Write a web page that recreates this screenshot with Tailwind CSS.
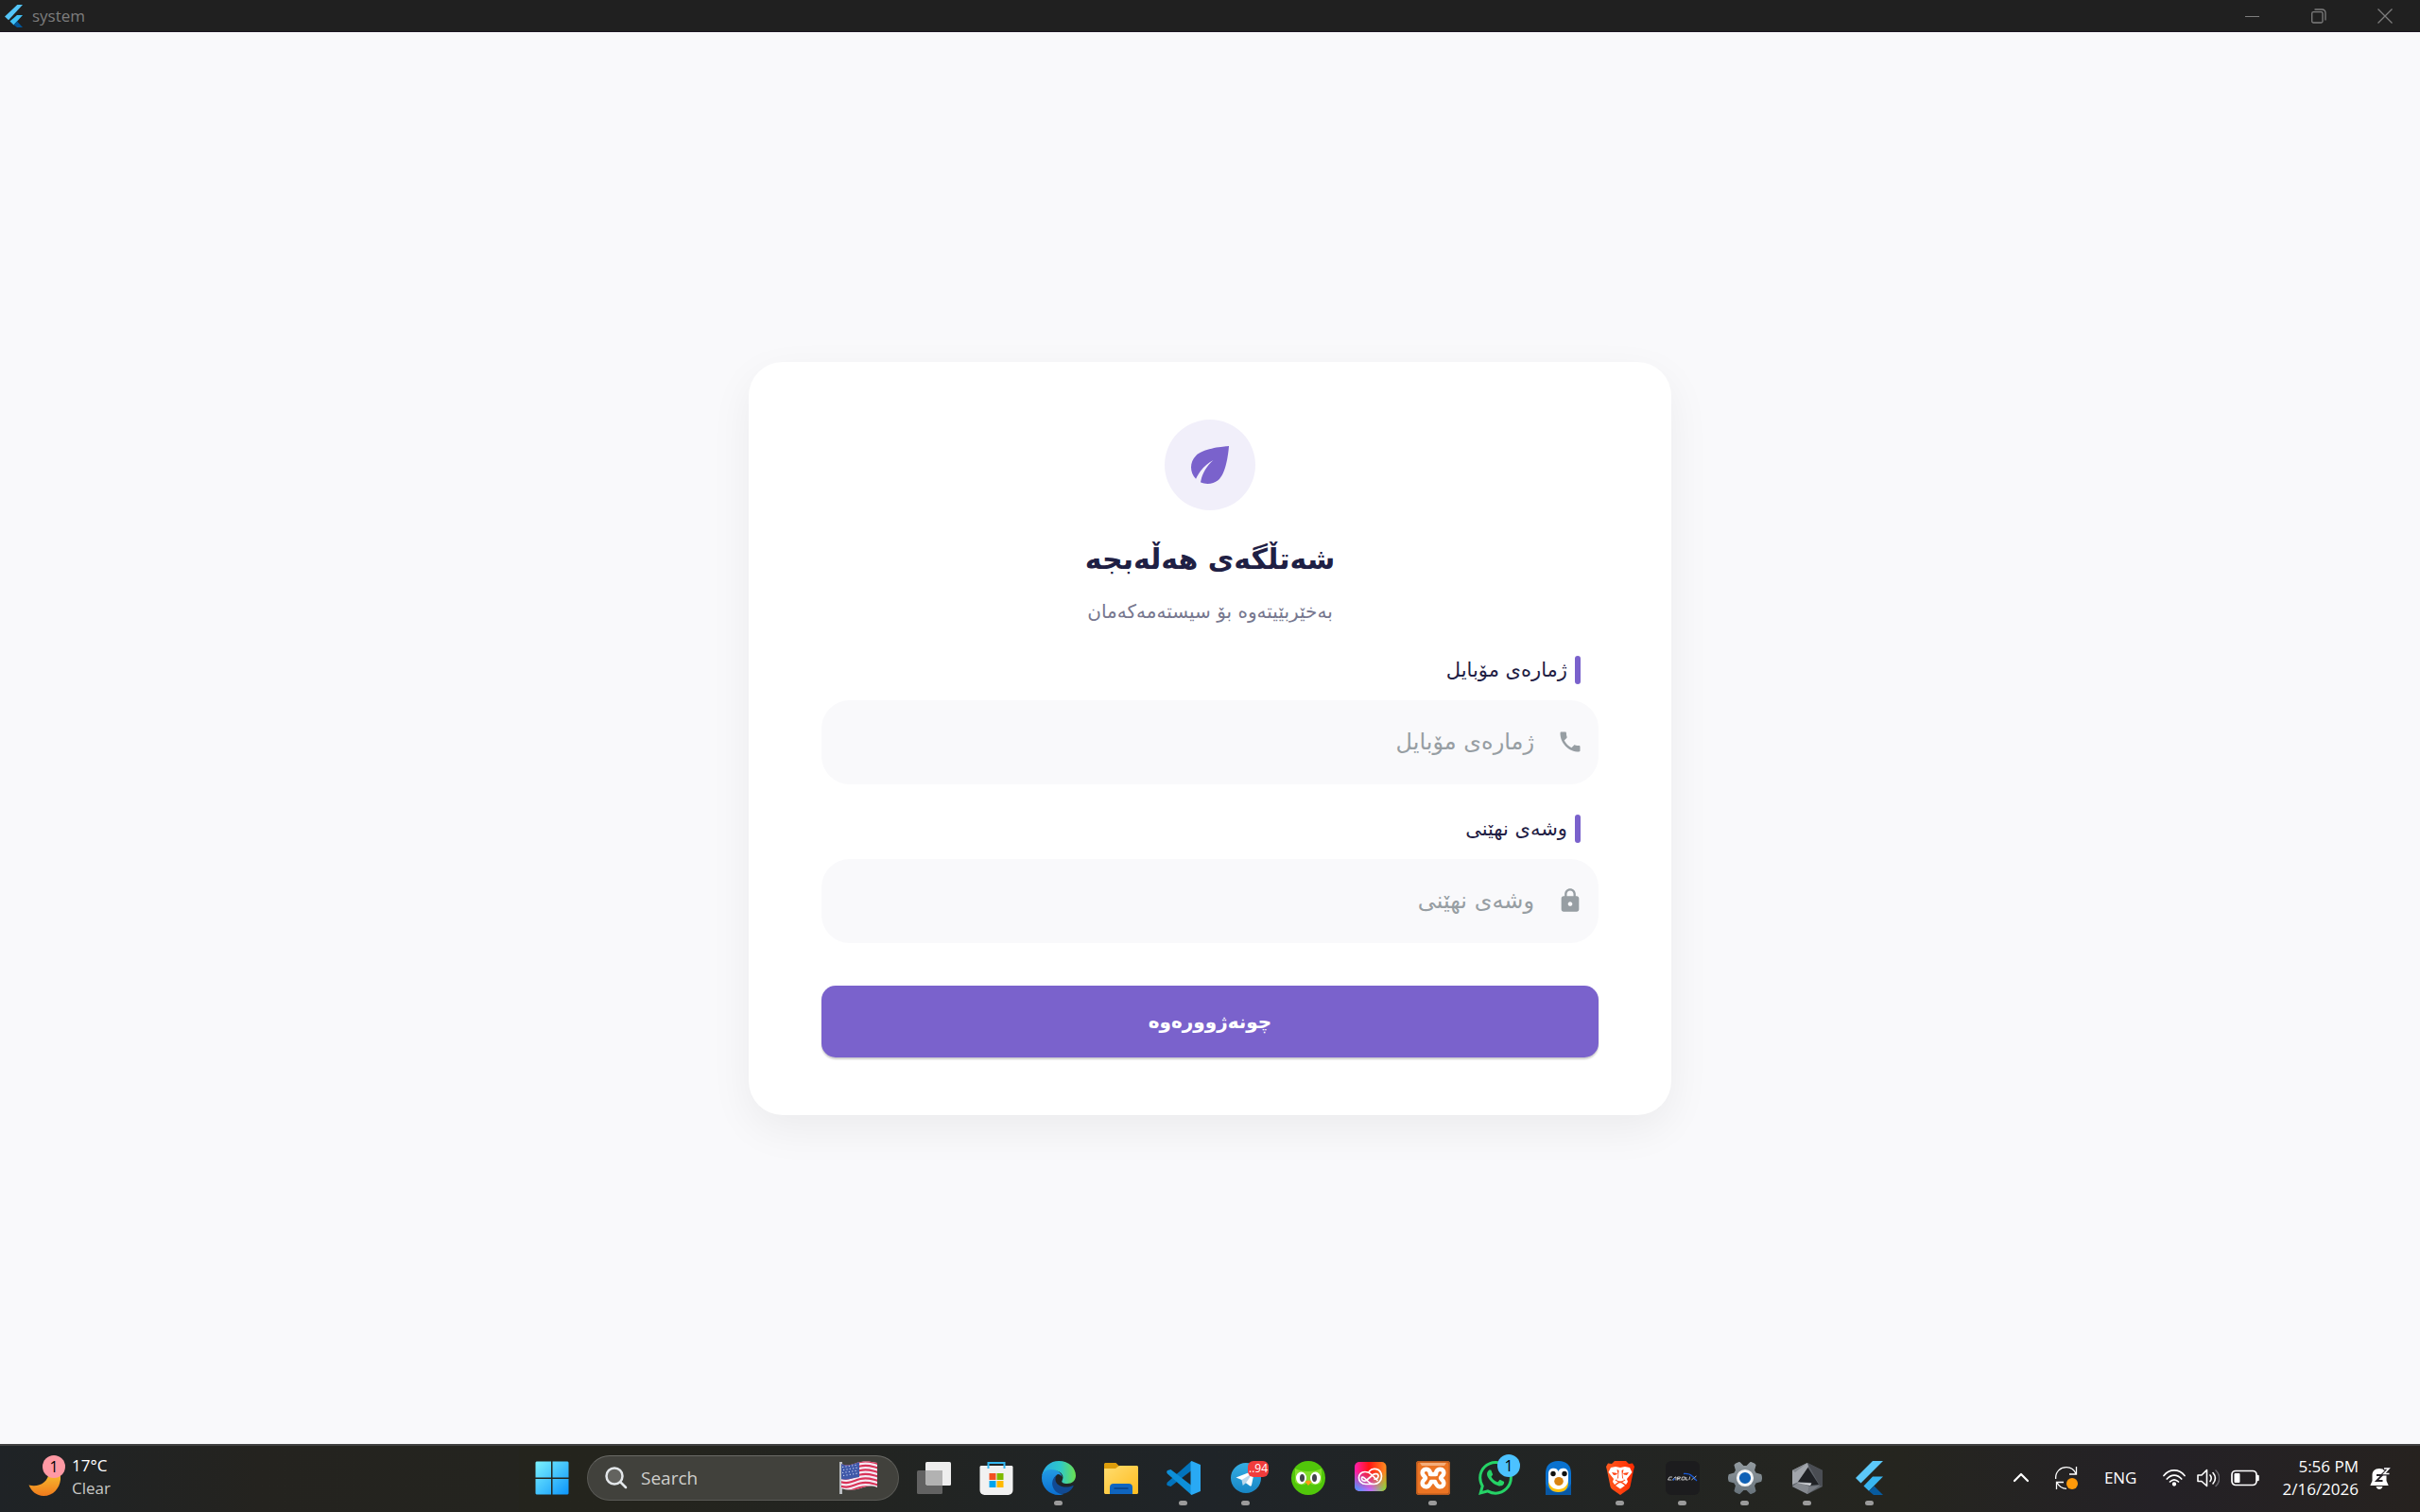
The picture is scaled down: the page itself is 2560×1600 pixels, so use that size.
<!DOCTYPE html>
<html lang="en">
<head>
    <meta charset="UTF-8">
    <meta name="viewport" content="width=device-width, initial-scale=1.0">
    <title>system</title>
    <script src="https://cdn.jsdelivr.net/npm/@tailwindcss/browser@4"></script>
</head>
<body class="flex flex-col h-screen bg-[#f9f9fb] font-['Open_Sans','Noto_Sans',sans-serif]">

    <!-- Title bar -->
    <header class="flex items-center justify-between h-[34px] shrink-0 bg-[#202020] border-b border-[#1c1522] text-[#7d7d7d]">
        <div class="flex items-center gap-1.5 pl-1">
            <svg class="w-6 h-6" viewBox="0 0 24 24">
                <path fill="#54c5f8" d="M14.3 0 1 12.5l4 3.7L20 0z"/>
                <path fill="#40c0f5" d="M14 11 6.5 17.5l4 4L20 11z"/>
                <path fill="#01579b" d="m10.500 21.200 3.500 2.800h6l-6-6.500z"/>
            </svg>
            <span class="text-[17px] leading-6">system</span>
        </div>
        <div class="flex h-full pr-0.5">
            <button type="button" aria-label="Minimize" class="flex items-center justify-center w-[70px]">
                <svg class="w-4 h-4" viewBox="0 0 16 16" stroke="currentColor"><path d="M0 8.500h15"/></svg>
            </button>
            <button type="button" aria-label="Restore" class="flex items-center justify-center w-[70px]">
                <svg class="w-4 h-4" viewBox="0 0 16 16" fill="none" stroke="currentColor" stroke-width="1.300"><rect x=".7" y="3.700" width="11.300" height="11.300" rx="1.500"/><path d="M3.500 1h8a3.500 3.500 0 0 1 3.500 3.500v8"/></svg>
            </button>
            <button type="button" aria-label="Close" class="flex items-center justify-center w-[70px]">
                <svg class="w-4 h-4" viewBox="0 0 16 16" stroke="currentColor" stroke-width="1.300"><path d="m.5.5 15 15m0-15-15 15"/></svg>
            </button>
        </div>
    </header>

    <!-- Login card -->
    <main dir="rtl" lang="ckb" class="flex flex-1 items-center justify-center font-['DejaVu_Sans',sans-serif]">
        <form class="flex flex-col w-full max-w-[976px] px-[77px] py-[61px] bg-white rounded-[36px] shadow-[0_15px_45px_rgba(0,0,0,0.06)]">
            <div class="flex items-center justify-center self-center w-24 h-24 rounded-full bg-[#f1effa]">
                <svg class="w-[60px] h-[60px]" viewBox="0 0 24 24" fill="#7a62cc"><path d="M6.050 8.050c-2.730 2.730-2.730 7.150-.02 9.880 1.470-3.400 4.090-6.240 7.360-7.930-2.770 2.340-4.710 5.610-5.390 9.320 2.600 1.230 5.800.78 7.950-1.370C19.430 14.470 20 4 20 4S9.530 4.570 6.050 8.050z"/></svg>
            </div>
            <h1 class="mt-7 text-center text-[30px] leading-[48px] font-bold text-[#1f2044]">شەتڵگەی هەڵەبجە</h1>
            <p class="mt-4 text-center text-[20px] leading-[30px] text-[#77788f]">بەخێربێیتەوە بۆ سیستەمەکەمان</p>

            <div class="flex items-center gap-2 mt-8 px-[19px] h-[30px]">
                <span class="w-1.5 h-full rounded-[3px] bg-[#7a62cc]"></span>
                <label for="phone" class="text-[21px] leading-[30px] text-[#1f2044]">ژمارەی مۆبایل</label>
            </div>
            <div class="flex items-center gap-6 mt-[17px] px-4 h-[89px] rounded-[30px] bg-[#f9f9fb]">
                <svg class="w-7 h-7 shrink-0" viewBox="0 0 24 24" fill="#979ea3"><path d="M6.620 10.790c1.440 2.830 3.760 5.140 6.590 6.590l2.200-2.200c.27-.27.67-.36 1.020-.24 1.120.37 2.330.57 3.570.57.55 0 1 .45 1 1V20c0 .55-.45 1-1 1-9.390 0-17-7.610-17-17 0-.55.45-1 1-1h3.500c.55 0 1 .45 1 1 0 1.250.2 2.450.57 3.570.11.35.03.74-.25 1.020l-2.200 2.200z"/></svg>
                <input type="tel" id="phone" name="phone" dir="rtl" placeholder="ژمارەی مۆبایل" class="flex-1 h-full text-[24px] text-[#1f2044] placeholder:text-[#979ea3] outline-none">
            </div>

            <div class="flex items-center gap-2 mt-8 px-[19px] h-[30px]">
                <span class="w-1.5 h-full rounded-[3px] bg-[#7a62cc]"></span>
                <label for="password" class="text-[21px] leading-[30px] text-[#1f2044]">وشەی نهێنی</label>
            </div>
            <div class="flex items-center gap-6 mt-[17px] px-4 h-[89px] rounded-[30px] bg-[#f9f9fb]">
                <svg class="w-7 h-7 shrink-0" viewBox="0 0 24 24" fill="#979ea3"><path d="M18 8h-1V6c0-2.760-2.240-5-5-5S7 3.240 7 6v2H6c-1.100 0-2 .9-2 2v10c0 1.100.9 2 2 2h12c1.100 0 2-.9 2-2V10c0-1.100-.9-2-2-2zm-6 9c-1.100 0-2-.9-2-2s.9-2 2-2 2 .9 2 2-.9 2-2 2zM9 8V6c0-1.660 1.340-3 3-3s3 1.340 3 3v2H9z"/></svg>
                <input type="password" id="password" name="password" dir="rtl" placeholder="وشەی نهێنی" class="flex-1 h-full text-[24px] text-[#1f2044] placeholder:text-[#979ea3] outline-none">
            </div>

            <button type="submit" class="mt-[45px] h-[76px] rounded-[15px] bg-[#7a62cc] text-[20px] leading-8 font-bold text-white shadow-[0_2px_2px_rgba(0,0,0,0.2)]">چونەژوورەوە</button>
        </form>
    </main>

    <!-- Taskbar -->
    <footer class="grid grid-cols-[1fr_auto_1fr] h-[72px] shrink-0 border-t-2 border-[#414141] bg-linear-to-r from-[#1f2326] via-[#1f2428] to-[#26221f] text-white">
        <div class="flex items-center bg-linear-to-r from-[#1f2326] via-[#24231f] to-[#24241f] pl-[30px] pb-1 gap-3">
            <div class="relative w-[34px] h-[46px]">
                <svg class="w-full h-full" viewBox="0 0 34 46">
                    <defs><linearGradient id="moon" x2="0" y2="1"><stop stop-color="#f7c331"/><stop offset="1" stop-color="#f07a1c"/></linearGradient></defs>
                    <path fill="url(#moon)" d="M33 17c4 11-3 26-17 26C9 43 3 38 .5 31.500 10 34 21 30 22 17z"/>
                </svg>
                <span class="absolute top-0 left-[15px] w-6 h-6 rounded-full bg-[#ff99a4] text-black text-[16px] leading-6 text-center">1</span>
            </div>
            <p class="text-[17px] leading-6">17°C<br><span class="text-[#c8c8c6]">Clear</span></p>
        </div>

        <nav class="flex pl-0.5 pb-0.5 bg-linear-to-r from-[#24241d] from-10% via-[#1f2428] via-50% to-[#25251f]">
            <button type="button" aria-label="Start" class="flex items-center justify-center w-[66px]">
                <svg class="w-9 h-9" viewBox="0 0 36 36">
                    <defs><linearGradient id="win" gradientUnits="userSpaceOnUse" x1="0" y1="0" x2="36" y2="36"><stop stop-color="#7df4ff"/><stop offset="1" stop-color="#0a93fb"/></linearGradient></defs>
                    <path fill="url(#win)" d="M1.500.5H17v17H.5v-16zm17 0h16l1 1v16h-17zM.5 19H17v16.500H1.500l-1-1zm18 0h17v15.500l-1 1h-16z"/>
                </svg>
            </button>
            <div class="flex items-center w-[338px] px-1">
                <label for="search" class="flex items-center w-full h-12 pl-[18px] pr-[22px] rounded-full bg-[#41413c] border border-[#5a5a56] border-t-[#6a6a66]">
                    <svg class="w-6 h-6 shrink-0" viewBox="0 0 24 24" fill="none" stroke="#e3e7ea" stroke-width="2.500" stroke-linecap="round"><circle cx="10" cy="10" r="8.500" fill="#63635f"/><path d="m16.500 16.500 5.500 5.500"/></svg>
                    <input type="text" id="search" placeholder="Search" class="flex-1 min-w-0 pl-[14px] text-[19px] placeholder:text-[#cfcfcc] outline-none">
                    <svg class="w-10 h-9 shrink-0" viewBox="0 0 40 36">
                        <defs><clipPath id="flag"><path d="M2 3c9 4 13-1 21-2 6-1 11 0 17 1v26c-7-3-12-1-18 1-7 2-14 2-20 0z"/></clipPath></defs>
                        <path stroke="#b9bcc0" stroke-width="3" d="M1.500 1v34"/>
                        <g clip-path="url(#flag)">
                            <path fill="#f4eaf4" d="M0 0h40v36H0z"/>
                            <path fill="none" stroke="#d93358" stroke-width="2.200" d="M1 4c9 3 13-1 21-3s11 0 19 2M1 8.500c9 3 13-1 21-3s11 0 19 2M1 13c9 3 13-1 21-3s11 0 19 2M1 17.500c9 3 13-1 21-3s11 0 19 2M1 22c9 3 13-1 21-3s11 0 19 2M1 26.500c9 3 13-1 21-3s11 0 19 2M1 31c9 3 13-1 21-3s11 0 19 2"/>
                            <path fill="#3f58a8" d="M1 2c9 4 13-1 20-2v17c-7 1-12 4-20 2z"/>
                            <path stroke="#c3cdee" stroke-width="1.200" stroke-dasharray="1.200 2.200" d="M3 6.500 20 4M4 9.500 20 7M3 12.500 20 10M4 15.500 20 13"/>
                        </g>
                    </svg>
                </label>
            </div>
            <button type="button" aria-label="Task view" class="flex items-center justify-center w-[66px]">
                <svg class="w-9 h-9" viewBox="0 0 36 36">
                    <rect x="9" y="1" width="27" height="25" rx="1.500" fill="#eee"/>
                    <rect y="10" width="27" height="25" rx="1.500" fill="#626262"/>
                    <path fill="#b2b2b2" d="M9 10h18v16H10.500L9 24.500z"/>
                </svg>
            </button>
            <button type="button" aria-label="Store" class="flex items-center justify-center w-[66px]">
                <svg class="w-9 h-9" viewBox="0 0 36 36">
                    <path fill="#f1f1f1" d="M1.500 5h33l1 1v25a5 5 0 0 1-5 5h-25a5 5 0 0 1-5-5V6z"/>
                    <path fill="none" stroke="#35b8f1" stroke-width="2" d="M9.500 8V2h17v6"/>
                    <path fill="#f25022" d="M10.500 13h7v7h-7z"/><path fill="#7fba00" d="M18.500 13h7v7h-7z"/><path fill="#00a4ef" d="M10.500 21h7v7h-7z"/><path fill="#ffb900" d="M18.500 21h7v7h-7z"/>
                </svg>
            </button>
            <button type="button" aria-label="Edge" class="relative flex items-center justify-center w-[66px]">
                <svg class="w-9 h-9" viewBox="0 0 36 36">
                    <defs>
                        <linearGradient id="edgeTop"><stop stop-color="#27a9e6"/><stop offset=".55" stop-color="#2fc8c8"/><stop offset="1" stop-color="#6be04e"/></linearGradient>
                        <linearGradient id="edgeBlue" x2="0" y2="1"><stop stop-color="#239be3"/><stop offset="1" stop-color="#0b6fd0"/></linearGradient>
                    </defs>
                    <path fill="url(#edgeTop)" d="M0 16C2 6 9 0 18 0c11 0 18 7.500 18 15.500 0 5-4 8.500-9 8.500-4.500 0-6.500-1.500-5.500-3 3-5-1-10.500-7-10.500C8 10.500 3 12 0 16z"/>
                    <path fill="url(#edgeBlue)" d="M0 18C0 12 5 9 10 9c6 0 11 3 11.500 8-1-2-2.500-3-4.500-3-3 2-5 5-4.500 9C13 30 17 34 23 35c-1.500.7-3 1-5 1C8 36 0 28 0 18z"/>
                    <path fill="#114a93" d="M16.500 14c-4 3-7 8-4.500 14 3 7 11 10 19 2.500 2-2 3.500-5 2-4.500-9 4-19 0-18.500-7 0-2 .8-3.700 2-5z"/>
                </svg>
                <span class="absolute bottom-[5px] left-7 w-[9px] h-[5px] rounded-full bg-[#9b9b9b]"></span>
            </button>
            <button type="button" aria-label="Files" class="flex items-center justify-center w-[66px]">
                <svg class="w-9 h-9" viewBox="0 0 36 36">
                    <defs><linearGradient id="folder" x2="1" y2="1"><stop stop-color="#ffdd70"/><stop offset="1" stop-color="#ffbc1f"/></linearGradient></defs>
                    <path fill="#dd9d0b" d="M1 2h11.500L16 5.500V12H0V3z"/>
                    <path fill="url(#folder)" d="M0 8h12l4-3h19l1 1v28l-1 1H1l-1-1z"/>
                    <path fill="#0f65c0" d="M6 35v-7a4 4 0 0 1 4-4h16a4 4 0 0 1 4 4v7z"/><path stroke="#0a3f80" stroke-width="1.500" stroke-linecap="round" d="M11 29h14"/>
                </svg>
            </button>
            <button type="button" aria-label="VS Code" class="relative flex items-center justify-center w-[66px]">
                <svg class="w-9 h-9" viewBox="0 0 36 36">
                    <path fill="#0274bd" d="M26.500 0v10L4.500 27 1 26q-1.500-1.500 0-3.500z"/>
                    <path fill="#0d8fd8" d="m4.500 9 22 17v10L1 13.500q-1.500-2 0-3.500z"/>
                    <path fill="#29a9f4" d="M26.500 0 36 4v28l-9.500 4-1-1V1z"/>
                </svg>
                <span class="absolute bottom-[5px] left-7 w-[9px] h-[5px] rounded-full bg-[#9b9b9b]"></span>
            </button>
            <button type="button" aria-label="Telegram" class="relative flex items-center justify-center w-[66px]">
                <svg class="w-9 h-9" viewBox="0 0 36 36">
                    <defs><linearGradient id="tg" x2="0" y2="1"><stop stop-color="#35aee4"/><stop offset="1" stop-color="#1786c5"/></linearGradient></defs>
                    <circle cx="18" cy="18" r="16" fill="url(#tg)"/>
                    <path fill="#fff" d="m7.500 17.500 18-7c1-.3 1.500.3 1.300 1.200L24 25.500c-.3 1.200-1 1.400-2 .8L13.500 20z"/>
                    <path fill="#b9d7eb" d="m13.500 20 1.200 6 3.500-3L25 13z"/>
                </svg>
                <span class="absolute top-4 left-[35px] w-[22px] h-[17px] rounded-md bg-[#f03c3c] text-[12px] leading-4">..94</span>
                <span class="absolute bottom-[5px] left-7 w-[9px] h-[5px] rounded-full bg-[#9b9b9b]"></span>
            </button>
            <button type="button" aria-label="Duolingo" class="flex items-center justify-center w-[66px]">
                <svg class="w-9 h-9" viewBox="0 0 36 36">
                    <circle cx="18" cy="18" r="18" fill="#51c70a"/>
                    <path fill="#82df2a" d="M4 8q6 3 14 3 8 0 14-3v14q-3 4-10 3l-4-3-4 3q-7 1-10-3z"/>
                    <ellipse cx="10.500" cy="18" rx="5.500" ry="6.500" fill="#fff"/><ellipse cx="25.500" cy="18" rx="5.500" ry="6.500" fill="#fff"/>
                    <ellipse cx="11.500" cy="18" rx="2.500" ry="4" fill="#42454b"/><ellipse cx="24.500" cy="18" rx="2.500" ry="4" fill="#42454b"/>
                    <path fill="#ff9a17" d="M14.500 22q3.500-3 7 0L18 26z"/>
                </svg>
            </button>
            <button type="button" aria-label="Creative Cloud" class="flex items-center justify-center w-[66px]">
                <svg class="w-9 h-9" viewBox="0 0 36 36">
                    <defs>
                        <linearGradient id="cc1"><stop stop-color="#ff1fb0"/><stop offset=".45" stop-color="#ff1414"/><stop offset="1" stop-color="#ff9020"/></linearGradient>
                        <linearGradient id="cc2"><stop stop-color="#3f9cff"/><stop offset=".5" stop-color="#c46cff"/><stop offset="1" stop-color="#7fe02c"/></linearGradient>
                        <linearGradient id="ccm" x2="0" y2="1"><stop offset=".3" stop-color="#000"/><stop offset=".85" stop-color="#fff"/></linearGradient>
                        <mask id="ccMask"><path fill="url(#ccm)" d="M0 0h36v36H0z"/></mask>
                    </defs>
                    <rect x="1" y="1" width="33.500" height="31" rx="5" fill="url(#cc1)"/>
                    <rect x="1" y="1" width="33.500" height="31" rx="5" fill="url(#cc2)" mask="url(#ccMask)"/>
                    <path fill="none" stroke="#fff" stroke-width="1.700" stroke-linecap="round" d="M22 24.500H13C3 24.500 3 11 12.500 11.500c3 0 5 1.500 6.500 3l6 6M16.500 11C20 6.500 29 7.500 29.500 16c0 5-3.500 8.500-8 8.500-3 0-4.500-1-6-2.500L13 19.500c-2-2-4-3.500-4.500-1.500-.5 2.500 2.500 4 5 2.500l7-6c3-2 6-.5 5.500 2-.5 2-2.500 3-4 2.500"/>
                </svg>
            </button>
            <button type="button" aria-label="XAMPP" class="relative flex items-center justify-center w-[66px]">
                <svg class="w-9 h-9" viewBox="0 0 36 36">
                    <rect width="36" height="36" rx="3" fill="#ec7423"/><rect x=".7" y=".7" width="34.600" height="34.600" rx="3" fill="none" stroke="#b75a1f" stroke-width="1.400"/><path fill="#f5ae7c" d="M4 2h28l-2 3H6z"/>
                    <path fill="none" stroke="#fff" stroke-width="4.500" stroke-linejoin="round" d="M12 9c-4-1-6 2-5 5 1 2 3 3 3 4s-2 2-3 4c-1 3 1 6 5 5 2-.5 3-2.500 4-5h4c1 2.500 2 4.500 4 5 4 1 6-2 5-5-1-2-3-3-3-4s2-2 3-4c1-3-1-6-5-5-2 .5-3 2-3 5h-6c0-3-1-4.500-3-5z"/>
                </svg>
                <span class="absolute bottom-[5px] left-7 w-[9px] h-[5px] rounded-full bg-[#9b9b9b]"></span>
            </button>
            <button type="button" aria-label="WhatsApp" class="relative flex items-center justify-center w-[66px]">
                <svg class="w-9 h-9" viewBox="0 0 24 24" fill="#25d366"><path d="M17.472 14.382c-.297-.149-1.758-.867-2.030-.967-.273-.099-.471-.148-.67.15-.197.297-.767.966-.94 1.164-.173.199-.347.223-.644.075-.297-.15-1.255-.463-2.390-1.475-.883-.788-1.480-1.761-1.653-2.059-.173-.297-.018-.458.13-.606.134-.133.298-.347.446-.52.149-.174.198-.298.298-.497.099-.198.05-.371-.025-.52-.075-.149-.669-1.612-.916-2.207-.242-.579-.487-.5-.669-.51-.173-.008-.371-.01-.57-.01-.198 0-.52.074-.792.372-.272.297-1.040 1.016-1.040 2.479 0 1.462 1.065 2.875 1.213 3.074.149.198 2.096 3.200 5.077 4.487.709.306 1.262.489 1.694.625.712.227 1.360.195 1.871.118.571-.085 1.758-.719 2.006-1.413.248-.694.248-1.289.173-1.413-.074-.124-.272-.198-.57-.347m-5.421 7.403h-.004a9.870 9.870 0 0 1-5.031-1.378l-.361-.214-3.741.982.998-3.648-.235-.374a9.860 9.860 0 0 1-1.510-5.260c.001-5.450 4.436-9.884 9.888-9.884 2.640 0 5.122 1.030 6.988 2.898a9.825 9.825 0 0 1 2.893 6.994c-.003 5.450-4.437 9.884-9.885 9.884m8.413-18.297A11.815 11.815 0 0 0 12.050 0C5.495 0 .16 5.335.157 11.892c0 2.096.547 4.142 1.588 5.945L.057 24l6.305-1.654a11.882 11.882 0 0 0 5.683 1.448h.005c6.554 0 11.890-5.335 11.893-11.893a11.821 11.821 0 0 0-3.480-8.413z"/></svg>
                <span class="absolute top-[9px] left-[35px] w-6 h-6 rounded-full bg-[#4cc2ff] text-black text-[16px] leading-6 text-center">1</span>
            </button>
            <button type="button" aria-label="Penguin" class="flex items-center justify-center w-[66px]">
                <svg class="w-9 h-9" viewBox="0 0 36 36">
                    <path fill="#0a72d0" d="M5 36V13C5 5 10 0 18 0h1c8 0 13 5 13 13v23z"/><path fill="#0858a5" d="M5 36V24q3 9 13.500 9T32 24v12z"/>
                    <path fill="#ffc20e" d="M8 22q0 11 10.500 11T29 22z"/>
                    <path fill="#fff" d="M8 13a5.500 5.500 0 0 1 10.500-2A5.500 5.500 0 0 1 29 13v7c0 6-5 10-10.500 10S8 26 8 20z"/>
                    <circle cx="13" cy="13.500" r="2.700" fill="#111"/><circle cx="25" cy="13.500" r="2.700" fill="#111"/><ellipse cx="19" cy="21.500" rx="4.800" ry="4.500" fill="#d98312"/>
                </svg>
            </button>
            <button type="button" aria-label="Brave" class="relative flex items-center justify-center w-[66px]">
                <svg class="w-9 h-9" viewBox="0 0 36 36">
                    <defs><linearGradient id="brave"><stop stop-color="#ff5a1f"/><stop offset="1" stop-color="#ff2a00"/></linearGradient></defs>
                    <path fill="url(#brave)" d="m12 0-3 3-4-.5L3 6l1 4 3.500 17q.5 2 2 3L18 36l8.500-6q1.500-1 2-3L32 10l1-4-2-3.500-4 .5-3-3z"/>
                    <path fill="#fff" d="m8 7 5-1 5 1 5-1 5 1 2.500 5-5.500 7 1 3-2 3-5-3.500h-2L12 25l-2-3 1-3-5.500-7zM18 22.500l5 3.500-5 3.500-5-3.500z"/>
                    <path fill="#ff4413" d="m9 12 6 1-1 1.500-3 .5zm18 0-6 1 1 1.500 3 .5zM14.500 9l2 1-.5 8-2.500 2 4.500 2 4.500-2-2.500-2-.5-8 2-1-1 5 .5 4.500 2.500 2-5.500 3-5.500-3 2.500-2 .5-4.500z"/>
                </svg>
                <span class="absolute bottom-[5px] left-7 w-[9px] h-[5px] rounded-full bg-[#9b9b9b]"></span>
            </button>
            <button type="button" aria-label="Carolix" class="relative flex items-center justify-center w-[66px]">
                <svg class="w-9 h-9" viewBox="0 0 36 36">
                    <rect width="36" height="36" rx="6" fill="#1c1c1e"/>
                    <path fill="none" stroke="#e4e4e4" stroke-width=".8" d="M7 17H4l-1.500 3H6m1 .5L10 17h1v3.500m1.500 0V17h3l-.5 1.500h-2l2 2m2.500-3.500-.7 3h3l.7-3zm4.500 0-.8 3h2.500m2-3.500-.8 3.500m2.500 0 5-4m-4 0 3 4"/>
                    <path fill="none" stroke="#1557d6" stroke-width="1.300" d="M19 13.500q6-.5 9 2.500l5 5m-25-.5 1.500-2"/>
                </svg>
                <span class="absolute bottom-[5px] left-7 w-[9px] h-[5px] rounded-full bg-[#9b9b9b]"></span>
            </button>
            <button type="button" aria-label="Settings" class="relative flex items-center justify-center w-[66px]">
                <svg class="w-9 h-9" viewBox="0 0 36 36">
                    <defs><linearGradient id="gear" x2="0" y2="1"><stop stop-color="#929a9f"/><stop offset="1" stop-color="#69747c"/></linearGradient></defs>
                    <path fill="url(#gear)" stroke="url(#gear)" stroke-width="2" stroke-linejoin="round" d="m8.500 3.500 3.500-1.500 4 4h4l4-4 3.500 1.500 1 1L27 10l2 3.500 5.500 1.500q1 3 0 6L29 22.500 27 26l1.500 5.500-1 1L24 34l-4-4h-4l-4 4-3.500-1.500-1-1L9 26l-2-3.500L1.500 21q-1-3 0-6L7 13.500 9 10 7.500 4.500z"/>
                    <circle cx="18" cy="18" r="7.600" fill="#0f61b6" stroke="#f2f4f6" stroke-width="3"/>
                </svg>
                <span class="absolute bottom-[5px] left-7 w-[9px] h-[5px] rounded-full bg-[#9b9b9b]"></span>
            </button>
            <button type="button" aria-label="Hexagon" class="relative flex items-center justify-center w-[66px]">
                <svg class="w-9 h-9" viewBox="0 0 36 36">
                    <path fill="#5d6269" d="m18 2 16 8v17L18 35 2 27V10z"/>
                    <path fill="#a2a6ac" d="m18 2 1 4L9 22l-7 3V10z"/><path fill="#85898f" d="M18 2 2 10l3 2zM2 27l7-5 11 5-2 8z"/><path fill="#4a4d53" d="m18 2 16 8v17l-3-1z"/>
                    <path fill="#1f2125" d="M18.500 7 30 25l-10 1 2-3-14-1z"/><path fill="#d6d8dc" d="m7 23 14 3 1.500-2.500z"/><path fill="#777b82" d="m20 27 11-1-13 9z"/>
                </svg>
                <span class="absolute bottom-[5px] left-7 w-[9px] h-[5px] rounded-full bg-[#9b9b9b]"></span>
            </button>
            <button type="button" aria-label="Flutter" class="relative flex items-center justify-center w-[66px]">
                <svg class="w-9 h-9" viewBox="0 0 36 36">
                    <path fill="#5cc8f8" d="M21 0 3 18l5.500 5.500L32 0z"/>
                    <path fill="#38b6f1" d="M21 16.500 11.500 26.500l5.500 5.200 15-15.200z"/>
                    <path fill="#075b9f" d="m17 31.700 5 4.300h10L22.500 26.500z"/>
                </svg>
                <span class="absolute bottom-[5px] left-7 w-[9px] h-[5px] rounded-full bg-[#9b9b9b]"></span>
            </button>
        </nav>

        <div class="flex items-center justify-end pr-[31px] pb-0.5 bg-linear-to-r from-[#25251f] via-[#242126] to-[#26221f]">
            <svg class="w-4 h-4 mr-7" viewBox="0 0 16 16" fill="none" stroke="#fff" stroke-width="2.200" stroke-linecap="round" stroke-linejoin="round"><path d="m1 11 7-7 7 7"/></svg>
            <svg class="w-6 h-6 mr-7" viewBox="0 0 24 24" fill="none" stroke="#fff" stroke-width="1.300"><path d="M.7 13C0 5 6 .7 12 .7c5 0 8.500 3 10.300 7.300M22.500 0v8H15M1.500 24v-7.500H9M2 17c2.500 4.500 6 6.300 10 6.300"/><circle cx="18" cy="18" r="6" fill="#ff9a0a" stroke="none"/></svg>
            <span class="mr-7 text-[17px] leading-6">ENG</span>
            <svg class="w-6 h-6 mr-3" viewBox="0 0 24 24" fill="none" stroke="#fff" stroke-width="1.700" stroke-linecap="round"><path d="M1 9.500c6-7.500 16-7.500 22 0M4.300 13c4.500-5.300 11-5.300 15.400 0M7.500 16c3-3 6-3 9 0"/><circle cx="12" cy="18.500" r="1.300" fill="#fff"/></svg>
            <svg class="w-6 h-6 mr-3" viewBox="0 0 24 24" fill="none" stroke="#fff" stroke-width="1.600" stroke-linecap="round" stroke-linejoin="round"><path d="M1 9v6.500h4l5.500 5v-17L5 9zM14 9c1.500 2 1.500 4.500 0 6.500M17 6.500c3 3.500 3 8 0 11.500"/><path stroke="#66646a" d="M20 4c5 5 5 11.500 0 16.500"/></svg>
            <svg class="w-[30px] h-6" viewBox="0 0 30 24" fill="none" stroke="#fff" stroke-width="1.700"><rect x="1" y="4.500" width="26" height="15" rx="4"/><path stroke-width="2.500" stroke-linecap="round" d="M28.500 10v4"/><rect x="3.500" y="7" width="6" height="10" rx="1" fill="#fff" stroke="none"/></svg>
            <p class="ml-6 text-right text-[17px] leading-6">5:56 PM<br>2/16/2026</p>
            <svg class="w-[22px] h-[26px] ml-3" viewBox="0 0 22 26">
                <path fill="#fff" d="M10 3c5 0 7.500 3 7.500 7v6l2 4.500v.5H.5v-.5L2.500 16v-6c0-4 2.500-7 7.500-7zM6.500 22h7q-1 3-3.500 3t-3.500-3z"/>
                <path fill="none" stroke="#252126" stroke-width="1.800" d="M7 10h6l-6 6h6.500"/><path fill="none" stroke="#252126" stroke-width="3" d="M14 3h6l-6 6h7"/><path fill="none" stroke="#fff" stroke-width="1.600" d="M15 3h5l-5 5.500h5.500"/>
            </svg>
        </div>
    </footer>
</body>
</html>
